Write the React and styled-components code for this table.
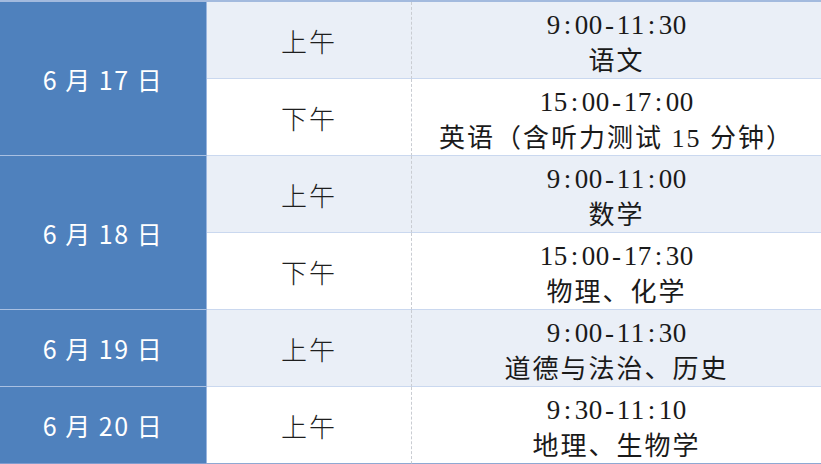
import React from 'react';
import styled, { createGlobalStyle } from 'styled-components';

const GlobalStyle = createGlobalStyle`
    html, body {
        margin: 0;
        padding: 0;
        background: #ffffff;
    }
`;

const schedule = [
    {
        date: '6 月 17 日',
        slots: [
            { period: '上午', time: '9:00-11:30', subject: '语文' },
            { period: '下午', time: '15:00-17:00', subject: '英语（含听力测试 15 分钟）' },
        ],
    },
    {
        date: '6 月 18 日',
        slots: [
            { period: '上午', time: '9:00-11:00', subject: '数学' },
            { period: '下午', time: '15:00-17:30', subject: '物理、化学' },
        ],
    },
    {
        date: '6 月 19 日',
        slots: [{ period: '上午', time: '9:00-11:30', subject: '道德与法治、历史' }],
    },
    {
        date: '6 月 20 日',
        slots: [{ period: '上午', time: '9:30-11:10', subject: '地理、生物学' }],
    },
];

const Table = styled.div`
    display: grid;
    grid-template-columns: 207px 205px 1fr;
    grid-template-rows: repeat(6, 77px);
    width: 821px;
    border-top: 2px solid #a3bade;
    font-family: 'Noto Sans CJK SC', sans-serif;
`;

const DateCell = styled.div`
    grid-column: 1;
    grid-row: span ${(props) => props.$span};
    display: flex;
    align-items: center;
    justify-content: center;
    background: #4f81bd;
    color: #ffffff;
    font-size: 25px;
    letter-spacing: 1.5px;
    border-right: 1px solid #9ab6df;
    border-bottom: 1px solid ${(props) => (props.$last ? '#7f9ccf' : '#a9c0e2')};
    white-space: pre;
`;

const PeriodCell = styled.div`
    grid-column: 2;
    display: flex;
    align-items: center;
    justify-content: center;
    background: ${(props) => (props.$shade ? '#eaeff7' : '#ffffff')};
    color: #1e1e1e;
    font-size: 26px;
    font-weight: 300;
    letter-spacing: 2px;
    border-right: 1px dashed #c9ccd2;
    border-bottom: 1px solid ${(props) => (props.$last ? '#8ea8d2' : '#cad8ef')};
`;

const SlotCell = styled(PeriodCell)`
    grid-column: 3;
    flex-direction: column;
    justify-content: flex-start;
    padding-top: 6px;
    border-right: none;
    font-weight: 400;
`;

const TimeLine = styled.div`
    font-family: 'Liberation Serif', serif;
    font-size: 27px;
    line-height: 34px;
    letter-spacing: 0;
    color: #1a1a1a;
`;

const TimeChar = styled.span`
    display: inline-block;
    width: 14px;
    text-align: center;
`;

const SubjectLine = styled.div`
    margin-top: 2px;
    font-family: 'Liberation Serif', 'Noto Sans CJK SC', serif;
    font-size: 26px;
    line-height: 36px;
    letter-spacing: 2px;
    color: #1a1a1a;
    white-space: pre;
`;

const Time = ({ value }) => (
    <TimeLine>
        {value.split('').map((ch, i) => (
            <TimeChar key={i}>{ch}</TimeChar>
        ))}
    </TimeLine>
);

const App = () => {
    let row = 0;
    return (
        <>
            <GlobalStyle />
            <Table>
                {schedule.map((day, d) => (
                    <React.Fragment key={day.date}>
                        <DateCell $span={day.slots.length} $last={d === schedule.length - 1}>
                            {day.date}
                        </DateCell>
                        {day.slots.map((slot, i) => {
                            const shade = row % 2 === 0;
                            row += 1;
                            const last = row === 6;
                            return (
                                <React.Fragment key={i}>
                                    <PeriodCell $shade={shade} $last={last} style={{ gridRow: row }}>
                                        {slot.period}
                                    </PeriodCell>
                                    <SlotCell $shade={shade} $last={last} style={{ gridRow: row }}>
                                        <Time value={slot.time} />
                                        <SubjectLine>{slot.subject}</SubjectLine>
                                    </SlotCell>
                                </React.Fragment>
                            );
                        })}
                    </React.Fragment>
                ))}
            </Table>
        </>
    );
};

export default App;
